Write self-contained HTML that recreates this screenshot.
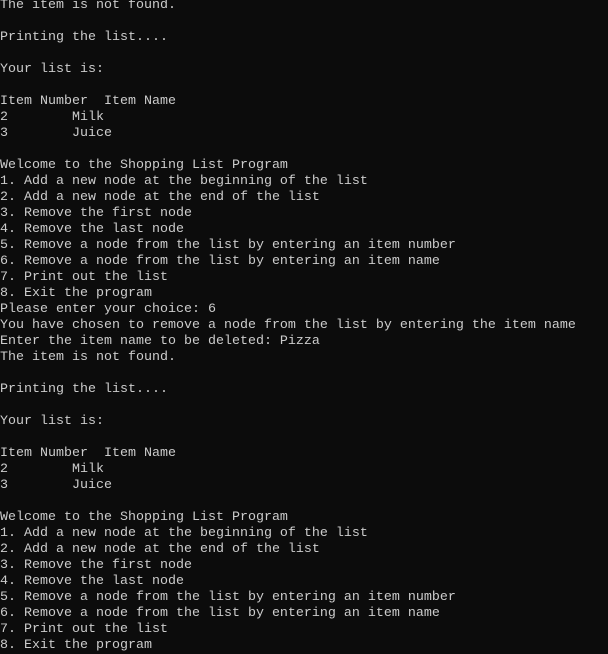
<!DOCTYPE html>
<html><head><style>
html,body{margin:0;padding:0;background:#0c0c0c;width:608px;height:654px;overflow:hidden}
pre{margin:0;position:absolute;top:-2px;left:0;font-family:"Liberation Mono",monospace;font-size:13.33px;line-height:16px;color:#cccccc;white-space:pre}
</style></head><body><pre>The item is not found.

Printing the list....

Your list is:

Item Number  Item Name
2        Milk
3        Juice

Welcome to the Shopping List Program
1. Add a new node at the beginning of the list
2. Add a new node at the end of the list
3. Remove the first node
4. Remove the last node
5. Remove a node from the list by entering an item number
6. Remove a node from the list by entering an item name
7. Print out the list
8. Exit the program
Please enter your choice: 6
You have chosen to remove a node from the list by entering the item name
Enter the item name to be deleted: Pizza
The item is not found.

Printing the list....

Your list is:

Item Number  Item Name
2        Milk
3        Juice

Welcome to the Shopping List Program
1. Add a new node at the beginning of the list
2. Add a new node at the end of the list
3. Remove the first node
4. Remove the last node
5. Remove a node from the list by entering an item number
6. Remove a node from the list by entering an item name
7. Print out the list
8. Exit the program</pre></body></html>
